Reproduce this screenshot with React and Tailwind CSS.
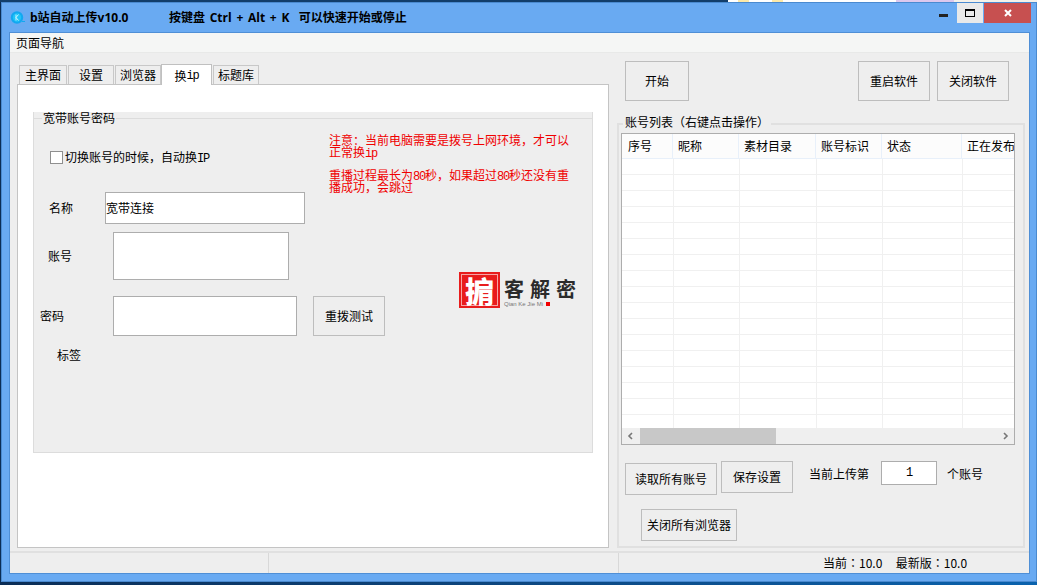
const headCols = [51, 66, 77, 66, 80, 52];
const rowCols = [52, 66, 77, 66, 80, 51];
const heads = ["序号", "昵称", "素材目录", "账号标识", "状态", "正在发布"];
const rows = Array.from({ length: 17 });
const mono = { fontFamily: '"Liberation Mono", monospace' };

function Btn({ className, children }) {
  return (
    <div className={"flex items-center justify-center border border-[#bdbdbd] bg-[#eeeeee] text-[12px] text-black " + className}>
      {children}
    </div>
  );
}

function Field({ className, children }) {
  return <div className={"border border-[#adadad] bg-white " + className}>{children}</div>;
}

function M({ children }) {
  return <span className="text-[12px] leading-[8px] tracking-[-1.2px]" style={mono}>{children}</span>;
}

export default function App() {
  return (
    <div
      className="flex h-[585px] w-[1037px] flex-col overflow-hidden bg-gradient-to-r from-[#0b2d55] to-[#0a62ad] text-[12px] leading-none text-black"
      style={{ fontFamily: '"Noto Sans CJK SC", "Liberation Sans", sans-serif' }}
    >
      {/* desktop peeking out above the window */}
      <div className="flex h-[2px] shrink-0 bg-[#123e6b]">
        <div className="ml-[728px] h-full w-[10px] bg-white" />
        <div className="h-full w-[11px] bg-[#fde9a8]" />
        <div className="h-full w-[23px] bg-white" />
        <div className="h-full w-[11px] bg-[#fde9a8]" />
        <div className="h-full w-[113px] bg-white" />
        <div className="h-full w-[58px] bg-[#dcc8ee]" />
        <div className="h-full flex-1 bg-[#f4f1ea]" />
      </div>
      <div className="ml-px flex h-[580px] w-[1036px] shrink-0 flex-col border border-[#4a8ad0] bg-[#69aaf2]">
        {/* title bar */}
        <div className="flex h-[29px] shrink-0 items-center">
          <svg className="ml-[8px] h-[15px] w-[15px]" viewBox="0 0 15 15">
            <circle cx="7" cy="7.5" r="5.2" fill="#1fc4f8" stroke="#12a8f0" strokeWidth="2" />
            <path d="M8.5 4.5L6 7.5l2.5 3M6 4.5v6" fill="none" stroke="#c8f2ff" strokeWidth="1" />
            <path d="M12 11.5h3" stroke="#12a8f0" strokeWidth="1" />
          </svg>
          <span className="ml-[5px] w-[139px] text-[12px] font-bold" style={{ fontFamily: '"Open Sans", "Noto Sans CJK SC", sans-serif' }}>
            b站自动上传v10.0
          </span>
          <span className="whitespace-pre text-[12px] font-bold" style={{ fontFamily: '"Open Sans", "Noto Sans CJK SC", sans-serif', wordSpacing: "1.6px" }}>按键盘 Ctrl + Alt + K  可以快速开始或停止</span>
          <div className="ml-auto flex h-[20px] items-start self-start pr-[5px]">
            <svg className="mr-[9px] mt-[11px] h-[3px] w-[9px]" viewBox="0 0 9 3"><rect width="9" height="3" fill="#222" /></svg>
            <div className="flex h-[20px] w-[26px] items-center justify-center bg-[#e9e9e9]">
              <div className="h-[8px] w-[10px] border border-t-2 border-black" />
            </div>
            <div className="ml-px flex h-[20px] w-[47px] items-center justify-center bg-[#c75050]">
              <svg className="h-[8px] w-[8px]" viewBox="0 0 8 8"><path d="M1 1l6 6M7 1l-6 6" stroke="#fff" strokeWidth="2" /></svg>
            </div>
          </div>
        </div>

        {/* client */}
        <div className="ml-[7px] flex h-[542px] w-[1021px] shrink-0 flex-col border border-[#4f8fd6] bg-[#eeeeee]">
          <div className="flex h-[20px] shrink-0 items-center border-b border-[#e8e9e8] bg-[#f5f6f5] pl-[6px]">页面导航</div>
          <div className="flex min-h-0 flex-1">
            {/* left */}
            <div className="ml-[7px] flex w-[592px] shrink-0 flex-col pt-[11px]">
              <div className="z-10 flex h-[20px] items-end pl-[2px]">
                <div className="flex h-[19px] w-[48px] items-center justify-center border-x border-t border-[#c8c8c8] bg-[#eeeeee]">主界面</div>
                <div className="ml-px flex h-[19px] w-[46px] items-center justify-center border-x border-t border-[#c8c8c8] bg-[#eeeeee]">设置</div>
                <div className="ml-px flex h-[19px] w-[46px] items-center justify-center border-x border-t border-[#c8c8c8] bg-[#eeeeee]">浏览器</div>
                <div className="relative top-px flex h-[21px] w-[51px] items-center justify-center border-x border-t border-[#c0c0c0] bg-white pt-px">
                  换<M>ip</M>
                </div>
                <div className="ml-px flex h-[19px] w-[46px] items-center justify-center border-x border-t border-[#c8c8c8] bg-[#eeeeee]">标题库</div>
              </div>
              <div className="h-[465px] border border-[#c4c4c4] bg-white px-[15px] pt-[27px]">
                {/* group */}
                <div className="relative h-[341px] w-[560px] border-x border-b border-[#dcdcdc] bg-[#eeeeee]">
                  <div className="absolute left-0 right-0 top-[6px] h-px bg-[#dcdcdc]" />
                  <div className="relative ml-[8px] block w-fit bg-[#eeeeee] px-px leading-[12px]">宽带账号密码</div>
                  <div className="ml-[16px] mt-[26px] flex h-[14px] items-center">
                    <div className="h-[13px] w-[13px] border border-[#8f8f8f] bg-white" />
                    <span className="ml-[2px]">切换账号的时候，自动换<M>IP</M></span>
                  </div>
                  <div className="ml-[15px] mt-[28px] flex items-center">
                    <span className="w-[56px]">名称</span>
                    <Field className="flex h-[32px] w-[200px] items-center">宽带连接</Field>
                  </div>
                  <div className="ml-[14px] mt-[8px] flex items-center">
                    <span className="w-[65px]">账号</span>
                    <Field className="h-[48px] w-[176px]" />
                  </div>
                  <div className="ml-[6px] mt-[16px] flex items-center">
                    <span className="w-[73px]">密码</span>
                    <Field className="h-[40px] w-[184px]" />
                    <Btn className="ml-[16px] h-[40px] w-[72px]">重拨测试</Btn>
                  </div>
                  <div className="ml-[23px] mt-[13px]">标签</div>

                  {/* notes lie over the group */}
                  <div className="absolute left-[295px] top-[22px] w-[245px] text-[12px] leading-[12px] text-[#f00000]">
                    <p>注意：当前电脑需要是拨号上网环境，才可以正常换<M>ip</M></p>
                    <p className="mt-[11px]">重播过程最长为<M>80</M>秒，如果超过<M>80</M>秒还没有重播成功，会跳过</p>
                  </div>

                  {/* watermark */}
                  <div className="absolute left-[425px] top-[160px] flex items-start">
                    <div className="flex h-[36px] w-[41px] items-center justify-center bg-[#e81c1c] text-[29px] font-black leading-none text-white outline outline-1 -outline-offset-[3px] outline-white/60">掮</div>
                    <div className="ml-[4px] flex flex-col">
                      <span className="mt-[5px] whitespace-nowrap text-[20px] font-bold leading-[24px] tracking-[6px] text-[#2b2b2b]">客解密</span>
                      <span className="flex items-center whitespace-nowrap text-[6px] leading-[6px] text-[#777]" style={{ fontFamily: '"Liberation Sans", sans-serif' }}>Qian Ke Jie Mi<span className="ml-[3px] h-[4px] w-[4px] bg-[#f00000]" /></span>
                    </div>
                  </div>
                </div>
              </div>
            </div>

            {/* right */}
            <div className="ml-[8px] flex w-[408px] shrink-0 flex-col">
              <div className="flex h-[48px] shrink-0 items-start pl-[8px] pt-[8px]">
                <Btn className="h-[40px] w-[64px]">开始</Btn>
                <Btn className="ml-[169px] h-[40px] w-[72px]">重启软件</Btn>
                <Btn className="ml-[7px] h-[40px] w-[72px]">关闭软件</Btn>
              </div>
              <div className="relative mt-[22px] h-[425px] shrink-0 border-2 border-t-0 border-[#e0e0e0]">
                <div className="absolute -left-[2px] -right-[2px] top-0 h-[2px] bg-[#e0e0e0]" />
                <div className="absolute -top-[8px] left-[4px] bg-[#eeeeee] px-[2px] leading-[14px]">账号列表（右键点击操作）</div>
                <div className="ml-[2px] mt-[10px] flex h-[312px] w-[394px] flex-col overflow-hidden border border-[#adadad] bg-white">
                  <div className="flex h-[25px] shrink-0 border-b border-[#e8f0fa] bg-[#fcfcfc]">
                    {heads.map((h, i) => (
                      <div key={h} style={{ width: headCols[i] }} className="flex shrink-0 items-center overflow-hidden whitespace-nowrap border-r border-[#e8f0fa] pl-[5px] first:pl-[6px] last:border-r-0">{h}</div>
                    ))}
                  </div>
                  <div className="min-h-0 flex-1 overflow-hidden">
                    {rows.map((_, r) => (
                      <div key={r} className="flex h-[16px] border-b border-[#f0f0f0]">
                        {rowCols.map((w, i) => (
                          <div key={i} style={{ width: w }} className="shrink-0 border-r border-[#f0f0f0] last:border-r-0" />
                        ))}
                      </div>
                    ))}
                  </div>
                  <div className="flex h-[16px] shrink-0 items-center bg-[#efefef]">
                    <svg className="ml-[5px] h-[8px] w-[6px]" viewBox="0 0 6 8"><path d="M5 1L2 4l3 3" fill="none" stroke="#777" strokeWidth="1.6" /></svg>
                    <div className="ml-[7px] h-[16px] w-[136px] bg-[#c8c8c8]" />
                    <svg className="ml-auto mr-[5px] h-[8px] w-[6px]" viewBox="0 0 6 8"><path d="M1 1l3 3-3 3" fill="none" stroke="#777" strokeWidth="1.6" /></svg>
                  </div>
                </div>
                <div className="ml-[6px] mt-[16px] flex items-start">
                  <Btn className="mt-[2px] h-[32px] w-[92px]">读取所有账号</Btn>
                  <Btn className="ml-[4px] h-[32px] w-[72px]">保存设置</Btn>
                  <span className="ml-[16px] mt-[6px] leading-[14px]">当前上传第</span>
                  <Field className="ml-[12px] flex h-[24px] w-[56px] items-center justify-center">
                    <M>1</M>
                  </Field>
                  <span className="ml-[10px] mt-[6px] leading-[14px]">个账号</span>
                </div>
                <Btn className="ml-[22px] mt-[14px] h-[32px] w-[96px]">关闭所有浏览器</Btn>
              </div>
            </div>
          </div>
          {/* status bar */}
          <div className="mt-[3px] flex h-[22px] shrink-0 border-t-2 border-[#e0e0e0] text-[12px]">
            <div className="w-[259px] border-r border-[#d8d8d8]" />
            <div className="w-[350px] border-r border-[#d8d8d8]" />
            <div className="flex items-center whitespace-pre pl-[204px]" style={{ fontFamily: '"Noto Sans CJK TC", sans-serif' }}>当前：10.0     最新版：10.0</div>
          </div>
        </div>
      </div>
    </div>
  );
}
